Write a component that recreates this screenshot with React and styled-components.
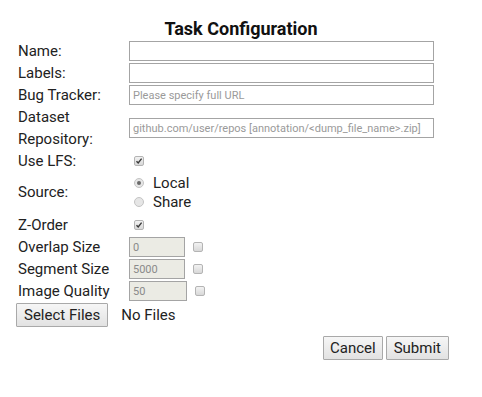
import React from 'react';
import styled, { createGlobalStyle } from 'styled-components';

const GlobalStyle = createGlobalStyle`
  html, body {
    margin: 0;
    padding: 0;
    background: #ffffff;
  }
  body {
    font-family: Roboto, "Liberation Sans", sans-serif;
    color: #222222;
  }
`;

const Page = styled.div`
  width: 482px;
  height: 397px;
  padding-top: 18px;
  box-sizing: border-box;
`;

const Title = styled.h1`
  margin: 0;
  height: 22px;
  line-height: 22px;
  font-size: 18px;
  font-weight: 700;
  text-align: center;
  color: #111111;
`;

const Form = styled.div`
  display: flex;
  flex-direction: column;
  padding-left: 18px;
  width: 434px;
  box-sizing: border-box;
`;

const Row = styled.div`
  display: flex;
  align-items: center;
  height: ${({ h }) => h || 22}px;
`;

const Label = styled.div`
  width: 111px;
  flex-shrink: 0;
  font-size: 15px;
  line-height: 22px;
  color: #222222;
`;

const Field = styled.div`
  flex: 1;
  display: flex;
  align-items: center;
  gap: 8px;
  padding-left: ${({ inset }) => (inset ? '5px' : '0')};
`;

const TextInput = styled.input`
  box-sizing: border-box;
  width: ${({ w }) => w || 305}px;
  height: 20px;
  margin: 0;
  padding: 0 3px;
  border: 1px solid #a4a4a4;
  background: ${({ disabled }) => (disabled ? '#ebebe4' : '#ffffff')};
  font-family: Roboto, "Liberation Sans", sans-serif;
  font-size: 11px;
  color: #8a8a8a;
  outline: none;
  &::placeholder {
    color: #9a9a9a;
  }
`;

const Check = styled.span`
  display: inline-flex;
  align-items: center;
  justify-content: center;
  width: 10px;
  height: 10px;
  box-sizing: border-box;
  border: 1px solid #b4b4b4;
  border-radius: 2px;
  background: linear-gradient(#f2f2f2, #d8d8d8);
`;

const RadioGroup = styled.div`
  display: flex;
  flex-direction: column;
`;

const RadioOption = styled.label`
  display: flex;
  align-items: center;
  gap: 9px;
  height: 19px;
  font-size: 15px;
  color: #222222;
`;

const RadioDot = styled.span`
  display: inline-flex;
  align-items: center;
  justify-content: center;
  width: 10px;
  height: 10px;
  box-sizing: border-box;
  border-radius: 50%;
  border: 1px solid #c4c4c4;
  background: #e6e6e6;
  &::after {
    content: '';
    display: ${({ checked }) => (checked ? 'block' : 'none')};
    width: 4px;
    height: 4px;
    border-radius: 50%;
    background: #6a6a6a;
  }
`;

const Button = styled.button`
  box-sizing: border-box;
  height: 24px;
  margin: 0;
  padding: 0 ${({ px }) => px || 7}px;
  border: 1px solid #a9a9a9;
  border-radius: 1px;
  background: linear-gradient(#f6f6f6, #e2e2e2);
  font-family: Roboto, "Liberation Sans", sans-serif;
  font-size: 15px;
  color: #222222;
`;

const FileRow = styled.div`
  display: flex;
  align-items: center;
  gap: 13px;
  margin-top: 1px;
  padding-left: 16px;
  font-size: 15px;
`;

const Actions = styled.div`
  display: flex;
  justify-content: flex-end;
  gap: 3px;
  width: 449px;
  margin-top: 9px;
`;

const CheckBox = () => (
  <Check>
    <svg width="8" height="8" viewBox="0 0 8 8">
      <path d="M1.5 4.2 L3.2 6 L6.6 1.6" fill="none" stroke="#3a3a3a" strokeWidth="1.4" />
    </svg>
  </Check>
);

const EmptyBox = () => <Check />;

export default function App() {
  return (
    <Page>
      <GlobalStyle />
      <Title>Task Configuration</Title>
      <Form>
        <Row>
          <Label>Name:</Label>
          <Field><TextInput /></Field>
        </Row>
        <Row>
          <Label>Labels:</Label>
          <Field><TextInput /></Field>
        </Row>
        <Row>
          <Label>Bug Tracker:</Label>
          <Field><TextInput placeholder="Please specify full URL" /></Field>
        </Row>
        <Row h={44}>
          <Label>Dataset<br />Repository:</Label>
          <Field>
            <TextInput placeholder="github.com/user/repos [annotation/<dump_file_name>.zip]" />
          </Field>
        </Row>
        <Row h={21}>
          <Label>Use LFS:</Label>
          <Field inset><CheckBox /></Field>
        </Row>
        <Row h={42}>
          <Label>Source:</Label>
          <Field inset>
            <RadioGroup>
              <RadioOption><RadioDot checked />Local</RadioOption>
              <RadioOption><RadioDot />Share</RadioOption>
            </RadioGroup>
          </Field>
        </Row>
        <Row h={23}>
          <Label>Z-Order</Label>
          <Field inset><CheckBox /></Field>
        </Row>
        <Row>
          <Label>Overlap Size</Label>
          <Field>
            <TextInput w={56} disabled value="0" readOnly />
            <EmptyBox />
          </Field>
        </Row>
        <Row>
          <Label>Segment Size</Label>
          <Field>
            <TextInput w={56} disabled value="5000" readOnly />
            <EmptyBox />
          </Field>
        </Row>
        <Row>
          <Label>Image Quality</Label>
          <Field>
            <TextInput w={58} disabled value="50" readOnly />
            <EmptyBox />
          </Field>
        </Row>
      </Form>
      <FileRow>
        <Button>Select Files</Button>
        <span>No Files</span>
      </FileRow>
      <Actions>
        <Button px={6}>Cancel</Button>
        <Button>Submit</Button>
      </Actions>
    </Page>
  );
}
